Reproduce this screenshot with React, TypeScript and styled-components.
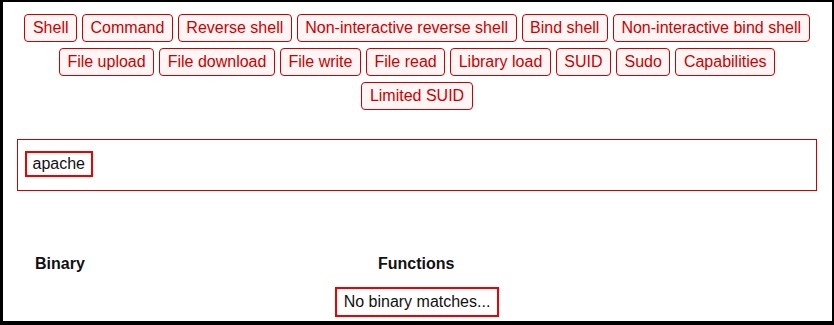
import styled, { createGlobalStyle } from "styled-components";

const GlobalStyle = createGlobalStyle`
  html, body {
    margin: 0;
    padding: 0;
    background: #fff;
  }
  body {
    font-family: "Liberation Sans", Arial, sans-serif;
    font-size: 16px;
    color: #111;
  }
`;

const Page = styled.div`
  box-sizing: border-box;
  width: 834px;
  height: 325px;
  overflow: hidden;
  border-style: solid;
  border-color: #000;
  border-width: 2px 2px 4px 3px;
  padding: 12px 15px 0 14px;
  display: flex;
  flex-direction: column;
`;

const FilterBar = styled.div`
  display: flex;
  flex-wrap: wrap;
  justify-content: center;
  gap: 6px 5px;
`;

const FilterButton = styled.button`
  font-family: "Liberation Sans", Arial, sans-serif;
  font-size: 16px;
  line-height: 18px;
  height: 28px;
  padding: 0 7.5px;
  color: #c00;
  background: #fff5f5;
  border: 1px solid #c00;
  border-radius: 4px;
  cursor: pointer;
`;

const SearchBox = styled.div`
  margin-top: 29px;
  height: 52px;
  box-sizing: border-box;
  border: 1px solid #c00;
  padding: 11px 7px;
  display: flex;
  align-items: flex-start;
`;

const Highlight = styled.span<{ $py: number; $px: number }>`
  display: inline-block;
  border: 2px solid #e00;
  line-height: 18px;
  padding: ${(p) => `${p.$py}px ${p.$px}px`};
  color: #111;
`;

const Table = styled.div`
  margin-top: 64px;
  display: grid;
  grid-template-columns: 343px 1fr;
`;

const HeaderCell = styled.div`
  font-weight: bold;
  line-height: 18px;
  padding-left: 18px;
`;

const EmptyRow = styled.div`
  grid-column: 1 / -1;
  display: flex;
  justify-content: center;
  margin-top: 14px;
`;

const filters = [
  "Shell",
  "Command",
  "Reverse shell",
  "Non-interactive reverse shell",
  "Bind shell",
  "Non-interactive bind shell",
  "File upload",
  "File download",
  "File write",
  "File read",
  "Library load",
  "SUID",
  "Sudo",
  "Capabilities",
  "Limited SUID",
];

const App = () => {
  return (
    <>
      <GlobalStyle />
      <Page>
        <FilterBar>
          {filters.map((f) => (
            <FilterButton key={f}>{f}</FilterButton>
          ))}
        </FilterBar>
        <SearchBox>
          <Highlight $py={2} $px={5.5}>apache</Highlight>
        </SearchBox>
        <Table>
          <HeaderCell>Binary</HeaderCell>
          <HeaderCell>Functions</HeaderCell>
          <EmptyRow>
            <Highlight $py={4} $px={7}>No binary matches...</Highlight>
          </EmptyRow>
        </Table>
      </Page>
    </>
  );
};

export default App;
